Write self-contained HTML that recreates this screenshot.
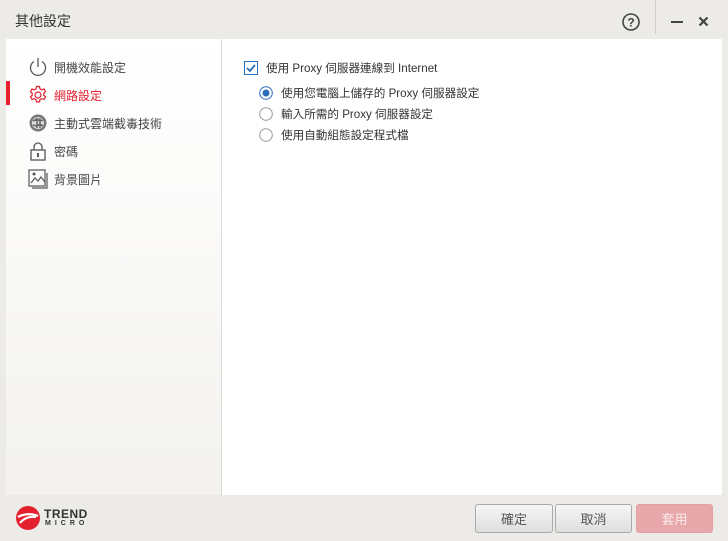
<!DOCTYPE html>
<html><head><meta charset="utf-8"><style>
*{margin:0;padding:0;box-sizing:border-box}
body{width:728px;height:541px;background:#edebe8;font-family:"Liberation Sans","Noto Sans CJK TC",sans-serif;position:relative;overflow:hidden;color:#333}
.title{position:absolute;left:15px;top:11px;font-size:14px;color:#333}
.sep{position:absolute;left:655px;top:0;width:1px;height:34px;background:#d0cecb}
.panel{position:absolute;left:6px;top:39px;width:716px;height:456px;background:#fff}
.side{position:absolute;left:0;top:0;width:216px;height:456px;background:linear-gradient(#fff,#f3f2ef);border-right:1px solid #dcdad7}
.item{position:absolute;left:22px;height:22px;font-size:12px;color:#444;display:flex;align-items:center}
.item svg{margin-right:6px}
.bar{position:absolute;left:0;top:42px;width:4px;height:24px;background:#e4202e}
.opt{position:absolute;font-size:11.6px;color:#333;display:flex;align-items:center}
.btn{position:absolute;top:504px;height:29px;border:1px solid #aaa;border-radius:3px;background:linear-gradient(#f6f6f6,#dedede);font-size:13px;color:#555;display:flex;align-items:center;justify-content:center}
</style></head><body>
<div class="title">其他設定</div>
<svg style="position:absolute;left:621px;top:12px" width="20" height="20" viewBox="0 0 20 20"><circle cx="10" cy="10" r="8" fill="none" stroke="#444" stroke-width="1.6"/><text x="10" y="14.5" font-size="12" font-weight="bold" text-anchor="middle" fill="#444" font-family="Liberation Sans">?</text></svg>
<div class="sep"></div>
<div style="position:absolute;left:671px;top:21px;width:12px;height:2px;background:#444"></div>
<svg style="position:absolute;left:698px;top:16px" width="11" height="11"><path d="M1.5 1.5L9.5 9.5M9.5 1.5L1.5 9.5" stroke="#444" stroke-width="2.2"/></svg>
<div class="panel">
 <div class="side">
  <div class="bar"></div>
  <div class="item" style="top:17px"><svg width="20" height="20" viewBox="0 0 20 20"><path d="M6 4.5A7.5 7.5 0 1 0 14 4.5" fill="none" stroke="#555" stroke-width="1.3"/><path d="M10 1v9" stroke="#555" stroke-width="1.3"/></svg>開機效能設定</div>
  <div class="item" style="top:45px;color:#e4202e"><svg width="20" height="20" viewBox="0 0 20 20"><circle cx="10" cy="10" r="3" fill="none" stroke="#e4202e" stroke-width="1.2"/><path d="M8.5 1.5h3l.5 2.3 1.8 1 2.2-.8 1.5 2.6-1.7 1.6v2l1.7 1.6-1.5 2.6-2.2-.8-1.8 1-.5 2.3h-3l-.5-2.3-1.8-1-2.2.8-1.5-2.6 1.7-1.6v-2L2.5 6.6 4 4l2.2.8 1.8-1z" fill="none" stroke="#e4202e" stroke-width="1.2"/></svg>網路設定</div>
  <div class="item" style="top:73px"><svg width="20" height="20" viewBox="0 0 20 20"><circle cx="10" cy="10" r="8.5" fill="#777"/><circle cx="10" cy="10" r="6" fill="#ddd"/><path d="M5 8l4-2 3 2 3-1M5 12l4 1 3-2 3 2M9 5v10M12 5v10" stroke="#666" stroke-width="1.5"/></svg>主動式雲端截毒技術</div>
  <div class="item" style="top:101px"><svg width="20" height="20" viewBox="0 0 20 20"><path d="M6 9V6a4 4 0 0 1 8 0v3" fill="none" stroke="#555" stroke-width="1.3"/><rect x="3" y="9" width="14" height="10" fill="none" stroke="#555" stroke-width="1.3"/><rect x="9" y="12" width="2" height="4" fill="#555"/></svg>密碼</div>
  <div class="item" style="top:129px"><svg width="20" height="20" viewBox="0 0 20 20"><rect x="1" y="1" width="16" height="16" fill="none" stroke="#555" stroke-width="1.2"/><path d="M3 14l4-5 3 3 3-4 4 5M19 4v15H4" fill="none" stroke="#555" stroke-width="1.2"/><circle cx="6" cy="5" r="1.5" fill="#555"/></svg>背景圖片</div>
 </div>
</div>
<div class="opt" style="left:244px;top:60px"><svg width="14" height="14" style="margin-right:8px"><rect x=".5" y=".5" width="13" height="13" fill="#fff" stroke="#2a6ebb"/><path d="M3 7l3 3 5-6" fill="none" stroke="#2a6ebb" stroke-width="1.8"/></svg>使用 Proxy 伺服器連線到 Internet</div>
<div class="opt" style="left:259px;top:85px"><svg width="14" height="14" style="margin-right:8px"><circle cx="7" cy="7" r="6.3" fill="#fff" stroke="#2a6ebb"/><circle cx="7" cy="7" r="3.5" fill="#2a6ebb"/></svg>使用您電腦上儲存的 Proxy 伺服器設定</div>
<div class="opt" style="left:259px;top:106px"><svg width="14" height="14" style="margin-right:8px"><circle cx="7" cy="7" r="6.3" fill="#fff" stroke="#999"/></svg>輸入所需的 Proxy 伺服器設定</div>
<div class="opt" style="left:259px;top:127px"><svg width="14" height="14" style="margin-right:8px"><circle cx="7" cy="7" r="6.3" fill="#fff" stroke="#999"/></svg>使用自動組態設定程式檔</div>
<svg style="position:absolute;left:15px;top:505px" width="26" height="26" viewBox="0 0 26 26"><circle cx="13" cy="13" r="12" fill="#e4202e"/><path d="M3 12c5-3 14-4 20-1M5 18c4-5 10-7 16-6" stroke="#fff" stroke-width="2.2" fill="none"/></svg>
<div style="position:absolute;left:44px;top:508px;font-size:12px;font-weight:bold;color:#333;letter-spacing:.5px;line-height:12px">TREND</div>
<div style="position:absolute;left:45px;top:520px;font-size:7px;font-weight:bold;color:#333;letter-spacing:4px">MICRO</div>
<div class="btn" style="left:475px;width:78px">確定</div>
<div class="btn" style="left:555px;width:77px">取消</div>
<div class="btn" style="left:636px;width:77px;background:#e8a7aa;border-color:#e3a0a3;color:#fbeaea">套用</div>
</body></html>
